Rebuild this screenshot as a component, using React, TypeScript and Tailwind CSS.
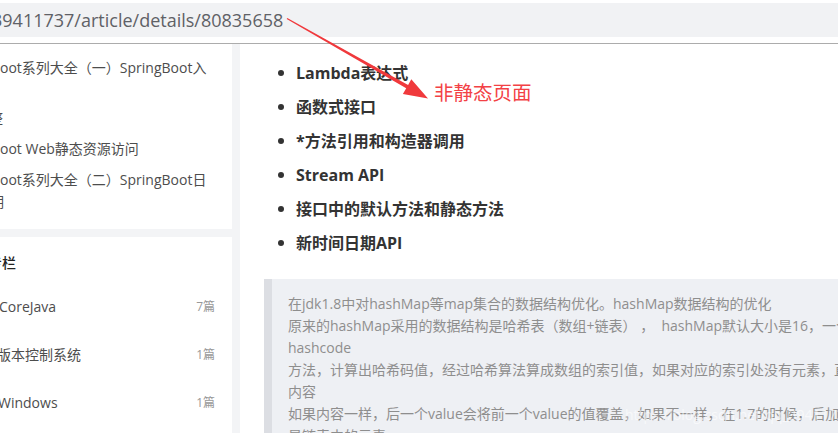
import React from "react";

const font = { fontFamily: '"Open Sans", "Noto Sans CJK SC", sans-serif' };

function Arrow() {
  const sx = 287, sy = 18.5, tx = 428, ty = 98.5;
  const dx = tx - sx, dy = ty - sy;
  const len = Math.sqrt(dx * dx + dy * dy);
  const ux = dx / len, uy = dy / len;
  const px = -uy, py = ux;
  const headLen = 24, headHalf = 8.5;
  const bx = tx - ux * headLen, by = ty - uy * headLen;
  const w0 = 0.6, w1 = 1.9;
  const pts = [
    [sx + px * w0, sy + py * w0],
    [bx + px * w1, by + py * w1],
    [bx + px * headHalf, by + py * headHalf],
    [tx, ty],
    [bx - px * headHalf, by - py * headHalf],
    [bx - px * w1, by - py * w1],
    [sx - px * w0, sy - py * w0],
  ]
    .map((p) => p.map((v) => v.toFixed(1)).join(","))
    .join(" ");
  return (
    <svg
      className="absolute left-0 top-0 pointer-events-none"
      width={838}
      height={433}
      viewBox="0 0 838 433"
    >
      <polygon points={pts} fill="#f0393c" />
    </svg>
  );
}

export default function App() {
  const bullets = [
    "Lambda表达式",
    "函数式接口",
    "*方法引用和构造器调用",
    "Stream API",
    "接口中的默认方法和静态方法",
    "新时间日期API",
  ];
  const quote = [
    "在jdk1.8中对hashMap等map集合的数据结构优化。hashMap数据结构的优化",
    "原来的hashMap采用的数据结构是哈希表（数组+链表） ，  hashMap默认大小是16，一个是0-15索引的数组",
    "hashcode",
    "方法，计算出哈希码值，经过哈希算法算成数组的索引值，如果对应的索引处没有元素，直接存放",
    "内容",
    "如果内容一样，后一个value会将前一个value的值覆盖，如果不一样，在1.7的时候，后加的放在前面",
    "是链表中的元素",
  ];
  const cats = [
    { name: "CoreJava", n: "7篇", ml: "-ml-[1px]" },
    { name: "版本控制系统", n: "1篇", ml: "-ml-[3px]" },
    { name: "Windows", n: "1篇", ml: "-ml-[2px]" },
  ];
  return (
    <div
      className="relative w-[838px] h-[433px] overflow-hidden bg-white flex flex-col"
      style={font}
    >
      {/* address bar */}
      <div className="shrink-0 pt-[3px]">
        <div className="h-[34px] bg-[#f1f2f4] flex items-center overflow-hidden">
          <span className="-ml-[8px] text-[18px] leading-[34px] text-[#5f6166] whitespace-nowrap">
            39411737/article/details/80835658
          </span>
        </div>
        <div className="h-[6px]" />
        <div className="h-[1px] bg-[#acacac]" />
      </div>

      {/* page */}
      <div className="flex flex-1 min-h-0 bg-[#f3f4f6]">
        {/* left column */}
        <div className="w-[232px] shrink-0 flex flex-col gap-[8px] text-[14px] leading-[22px] text-[#4d4d4d]">
          <div className="bg-white overflow-hidden pt-[13px] pb-[16px] whitespace-nowrap">
            <div>oot系列大全（一）SpringBoot入</div>
            <div className="mt-[28px] -ml-[11px]">整</div>
            <div className="mt-[9px]">oot Web静态资源访问</div>
            <div className="mt-[9px]">oot系列大全（二）SpringBoot日</div>
            <div className="-ml-[10px]">期</div>
          </div>
          <div className="bg-white flex-1 overflow-hidden pt-[15px] whitespace-nowrap">
            <div className="-ml-[12px] font-medium text-[#222]">专栏</div>
            <div className="mt-[9px] flex flex-col">
              {cats.map((c) => (
                <div
                  key={c.name}
                  className="flex items-center justify-between py-[13px] pr-[17px]"
                >
                  <span className={c.ml}>{c.name}</span>
                  <span className="text-[12px] text-[#999]">{c.n}</span>
                </div>
              ))}
            </div>
          </div>
        </div>
        <div className="w-[8px] shrink-0" />

        {/* right content */}
        <div className="flex-1 min-w-0 bg-white overflow-hidden pt-[12px]">
          <ul className="flex flex-col">
            {bullets.map((b) => (
              <li
                key={b}
                className="flex items-center h-[34px] pl-[38px] text-[16px] font-bold text-[#333] whitespace-nowrap"
              >
                <span className="w-[5.5px] h-[5.5px] rounded-full bg-[#333] mr-[12.5px] shrink-0" />
                <span>{b}</span>
              </li>
            ))}
          </ul>
          <div className="mt-[19px] ml-[24px] w-[700px] border-l-[8px] border-[#dcdee3] bg-[#eef0f4] pt-[14px] pl-[16px] text-[14px] leading-[22px] text-[#8e8e8e] whitespace-pre">
            {quote.map((q, i) => (
              <div key={i}>{q}</div>
            ))}
          </div>
        </div>
      </div>

      {/* annotation */}
      <Arrow />
      <div className="absolute left-[434px] top-[81px] text-[19.5px] leading-[24px] text-[#f34145] whitespace-nowrap">
        非静态页面
      </div>
      <div className="absolute left-[625px] top-[404px] text-[14px] leading-[22px] text-white/60 whitespace-nowrap">
        https://blog.csdn.net/qq_39411737
      </div>
    </div>
  );
}
